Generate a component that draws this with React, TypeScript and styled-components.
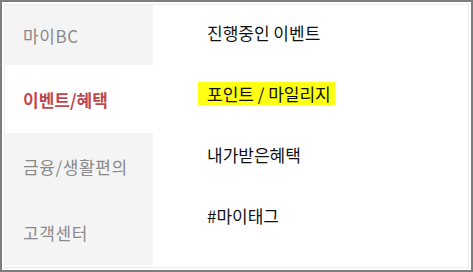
import React from "react";
import styled, { createGlobalStyle } from "styled-components";

const Global = createGlobalStyle`
  html, body { margin: 0; padding: 0; background: #fff; }
  body { font-family: "Noto Sans CJK KR", "Noto Sans", sans-serif; }
  * { box-sizing: border-box; }
`;

const Frame = styled.div`
  width: 473px;
  height: 272px;
  border: 2px solid #7d7d7d;
  padding: 2px;
  background: #fff;
`;

const Inner = styled.div`
  height: 100%;
  border: 1px solid #ececec;
  display: flex;
`;

const SideMenu = styled.ul`
  list-style: none;
  margin: 0;
  padding: 0;
  width: 148px;
  display: flex;
  flex-direction: column;
`;

const SideItem = styled.li<{ $active?: boolean; $h: number }>`
  height: ${(p) => p.$h}px;
  display: flex;
  align-items: center;
  padding-left: 18px;
  background: ${(p) => (p.$active ? "#fff" : "#f4f4f4")};
  color: ${(p) => (p.$active ? "#c0474d" : "#8a8a8a")};
  font-size: 17px;
  font-weight: ${(p) => (p.$active ? 700 : 400)};
  letter-spacing: ${(p) => (p.$active ? "0" : "0.6px")};
  flex: none;
`;

const SubMenu = styled.ul`
  list-style: none;
  margin: 0;
  padding: 15px 0 0 54px;
  display: flex;
  flex-direction: column;
  gap: 37px;
`;

const SubItem = styled.li`
  height: 24px;
  display: flex;
  align-items: center;
  font-size: 17px;
  color: #111;
  letter-spacing: 0;
`;

const Highlight = styled.span`
  display: inline-flex;
  align-items: center;
  height: 23px;
  margin-left: -9px;
  padding: 0 4px 0 9px;
  background: #ffff14;
`;

const side = [
  { label: "마이BC", h: 60 },
  { label: "이벤트/혜택", h: 68, active: true },
  { label: "금융/생활편의", h: 66 },
  { label: "고객센터", h: 66 },
];

export default function App() {
  return (
    <>
      <Global />
      <Frame>
        <Inner>
          <SideMenu>
            {side.map((s) => (
              <SideItem key={s.label} $h={s.h} $active={s.active}>
                {s.label}
              </SideItem>
            ))}
          </SideMenu>
          <SubMenu>
            <SubItem>진행중인 이벤트</SubItem>
            <SubItem>
              <Highlight>포인트 / 마일리지</Highlight>
            </SubItem>
            <SubItem>내가받은혜택</SubItem>
            <SubItem>#마이태그</SubItem>
          </SubMenu>
        </Inner>
      </Frame>
    </>
  );
}
